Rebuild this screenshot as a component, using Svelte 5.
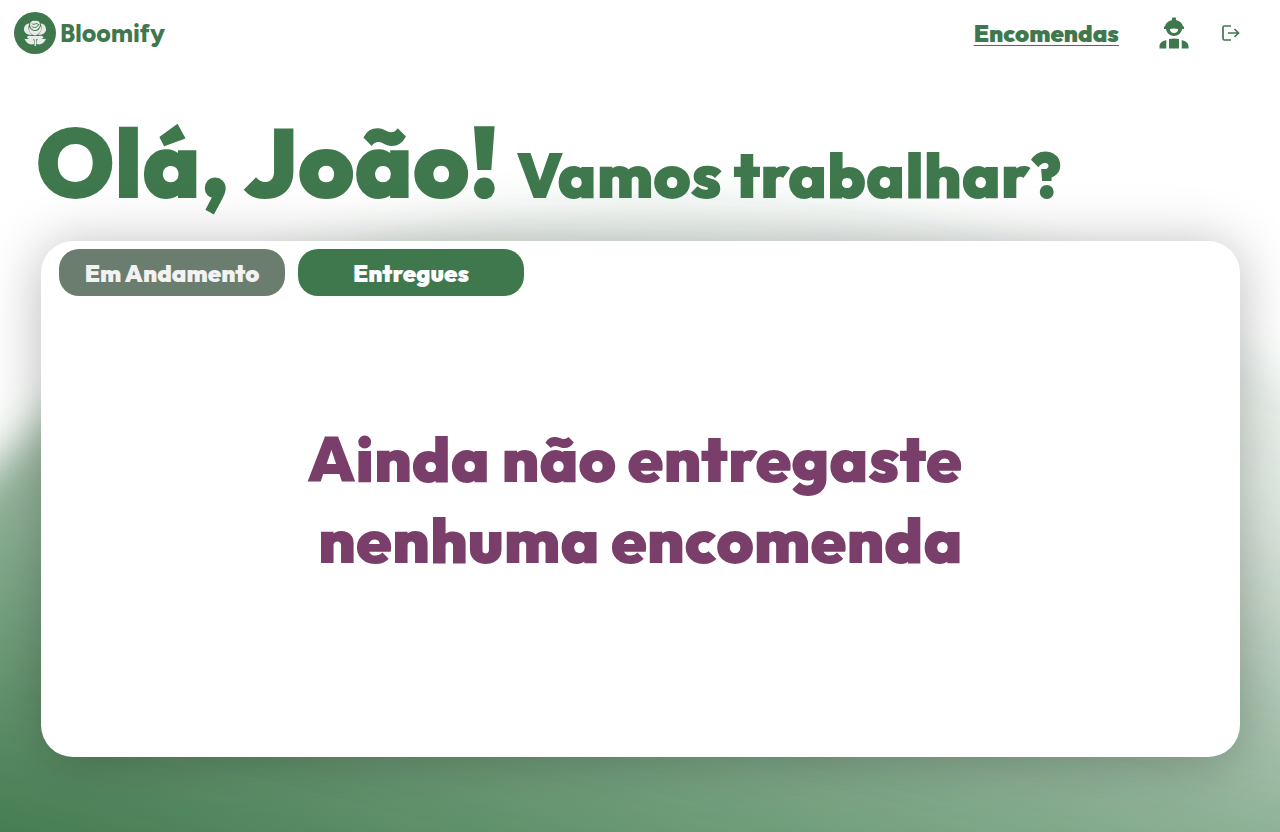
<script>
  let active = $state('Entregues');
  const tabs = ['Em Andamento', 'Entregues'];
</script>

<svelte:head><title>Bloomify</title></svelte:head>

<div class="page">
  <svg class="backdrop" viewBox="0 0 1280 832" preserveAspectRatio="none" aria-hidden="true">
    <defs>
      <linearGradient id="leaf" gradientUnits="userSpaceOnUse" x1="0" y1="832" x2="179" y2="121">
        <stop offset="0" stop-color="#3f784c" stop-opacity="0.97" />
        <stop offset="0.3" stop-color="#3f7c4d" stop-opacity="0.71" />
        <stop offset="0.85" stop-color="#3f784c" stop-opacity="0.17" />
        <stop offset="1" stop-color="#3f784c" stop-opacity="0.11" />
      </linearGradient>
      <filter id="soft" x="-20%" y="-20%" width="140%" height="140%">
        <feGaussianBlur stdDeviation="20" />
      </filter>
    </defs>
    <path
      d="M-150 590C20 460 60 370 240 290C400 215 560 190 760 205C1000 220 1200 300 1450 500V1000H-150Z"
      fill="url(#leaf)"
      filter="url(#soft)"
    />
  </svg>

  <header>
    <a class="brand" href="#inicio">
      <svg width="42" height="42" viewBox="0 0 42 42" aria-hidden="true">
        <circle cx="21" cy="21" r="21" fill="#3f784c" />
        <g fill="#e9ebe9">
          <path d="M15.500 11.500C12 11 9.500 15 10 18.500C11 21.500 14 23 18 23C14.500 20 13.500 15 15.500 11.500Z" />
          <path d="M26.500 11.500C30 11 32.500 15 32 18.500C31 21.500 28 23 24 23C27.500 20 28.500 15 26.500 11.500Z" />
          <path d="M15.500 15C17 18 19 19 21 19C24 19 26 17 26.500 14C28.500 19 25 22.500 21 23.500C17 22.500 14 20 15.500 15Z" />
          <path d="M16 12.500C16 9.500 19 8 21 9C24 8 26 10 26 12.500C26 16 23 18 21 18C18 18 16 15.500 16 12.500Z" />
          <path d="M13 25.500C14 22.500 18 24.500 21 24C24 24.500 28 22.500 29.500 25.500C28 28 24 27 21 27.500C18 27 15 28 13 25.500Z" />
          <path d="M10.500 27H19L20 29V32C15 33.500 13 31 10.500 27ZM32 27H24L22.500 29V32C27 33.500 30 31 32 27Z" />
          <path d="M20.500 26H22V34H20.500Z" />
        </g>
        <path d="M18 11.500C19.500 14 22 10 24.500 12.500M17.500 14C20 17 24 15 25 12" fill="none" stroke="#3f784c" stroke-width="1" />
      </svg>
      <span>Bloomify</span>
    </a>
    <nav>
      <a class="orders" href="#encomendas">Encomendas</a>
      <a class="icon" href="#perfil" aria-label="Perfil">
        <svg width="30" height="32" viewBox="0 0 30 32" fill="#3f784c" aria-hidden="true">
          <path d="M13 3V1.500Q13 .5 14 .5H16Q17 .5 17 1.500V3C21 4 23.500 6.500 24 9.500H25V12H23C22.500 16 19 19 15 19S7.500 16 7 12H5V9.500H6C6.500 6.500 9 4 13 3ZM10.800 12C11 14.500 12.500 16 15 16S19 14.500 19.200 12Q15 10.800 10.800 12Z" fill-rule="evenodd" />
          <path d="M10 22Q15 21 20 22V31.500H10ZM7.300 23V31.500H.5V29C.5 26 3.500 24 7.300 23ZM22.700 23V31.500H29.500V29C29.500 26 26.500 24 22.700 23Z" />
        </svg>
      </a>
      <button class="icon" type="button" aria-label="Sair">
        <svg width="18" height="16" viewBox="0 0 18 16" fill="none" stroke="#3f784c" stroke-width="1.700" aria-hidden="true">
          <path d="M9 1H2.500Q1 1 1 2.500V13.500Q1 15 2.500 15H9M6 8H16.500M12.500 4L16.500 8L12.500 12" />
        </svg>
      </button>
    </nav>
  </header>

  <main>
    <h1>Olá, João! <small>Vamos trabalhar?</small></h1>
    <section class="card">
      <div class="tabs">
        {#each tabs as tab}
          <button type="button" class:active={active === tab} aria-pressed={active === tab} onclick={() => (active = tab)}>{tab}</button>
        {/each}
      </div>
      <p class="empty">Ainda não entregaste<br />&nbsp;nenhuma encomenda</p>
    </section>
  </main>
</div>

<style>
  :global(body) {
    margin: 0;
    background: #fff;
  }
  .page {
    position: relative;
    isolation: isolate;
    box-sizing: border-box;
    min-height: 100vh;
    display: flex;
    flex-direction: column;
    overflow: hidden;
    color: #3f784c;
    font-family: Outfit, Lato, sans-serif;
    font-weight: 900;
  }
  .backdrop {
    position: absolute;
    inset: 0;
    z-index: -1;
    width: 100%;
    height: 100%;
  }
  header {
    display: flex;
    align-items: center;
    justify-content: space-between;
    height: 66px;
    padding: 0 40px 0 14px;
  }
  a {
    color: inherit;
  }
  .brand {
    display: flex;
    align-items: center;
    gap: 4px;
    font-family: Figtree, Outfit, sans-serif;
    font-size: 25px;
    font-weight: 800;
    line-height: 32px;
    text-decoration: none;
  }
  nav {
    display: flex;
    align-items: center;
    gap: 40px;
  }
  .orders {
    font-size: 24px;
    line-height: 32px;
    text-decoration-thickness: 1px;
    text-underline-offset: 3px;
  }
  .icon {
    display: flex;
    padding: 0;
    border: 0;
    background: none;
    cursor: pointer;
  }
  nav button.icon {
    margin-left: -7px;
  }
  main {
    flex: 1;
    display: flex;
    flex-direction: column;
    padding: 33px 40px 75px 41px;
  }
  h1 {
    margin: 0 0 0 -5px;
    font-size: 96px;
    line-height: 128px;
    font-weight: 900;
  }
  small {
    font-size: 64px;
    line-height: 64px;
  }
  .card {
    flex: 1;
    display: flex;
    flex-direction: column;
    box-sizing: border-box;
    margin-top: 14px;
    padding: 8px 18px;
    border-radius: 32px;
    background: #fff;
    box-shadow: 0 4px 56px rgb(0 0 0 / 28%);
  }
  .tabs {
    display: flex;
    flex-wrap: wrap;
    gap: 13px;
  }
  .tabs button {
    width: 226px;
    height: 47px;
    padding: 0;
    border: 0;
    border-radius: 20px;
    background: #6b7d6f;
    color: #f2f2f2;
    font: inherit;
    font-size: 24px;
    line-height: 32px;
    cursor: pointer;
  }
  .tabs button.active {
    background: #3f784c;
    color: #fff;
  }
  .empty {
    margin: auto;
    padding: 0 12px 48px 0;
    color: #793e69;
    font-size: 64px;
    line-height: 81px;
    text-align: center;
  }
</style>
